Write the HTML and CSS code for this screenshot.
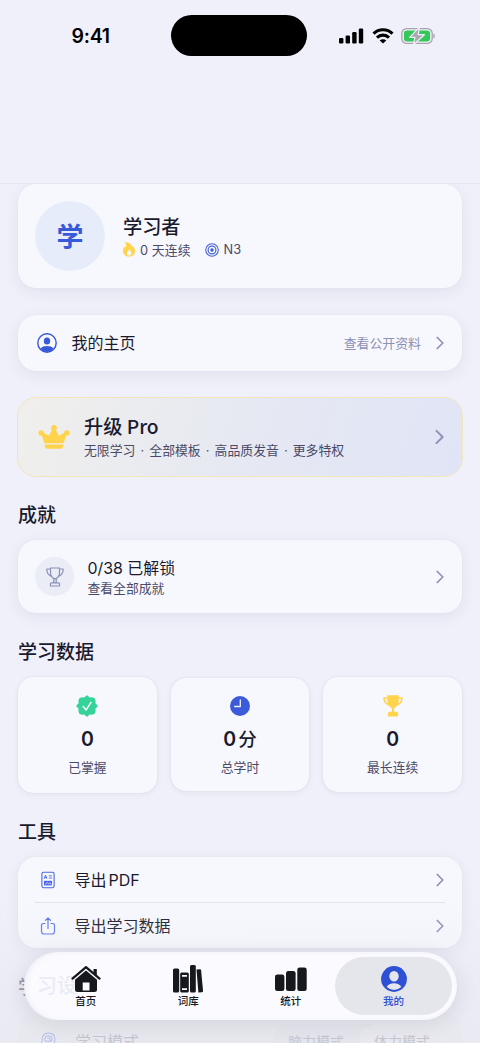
FILE: index.html
```html
<!DOCTYPE html>
<html lang="zh-CN">
<head>
<meta charset="utf-8">
<meta name="viewport" content="width=device-width, initial-scale=1">
<title>我的</title>
<link rel="stylesheet" href="styles.css">
</head>
<body>
<svg class="defs" width="0" height="0">
  <symbol id="chev" viewBox="0 0 8 14"><path d="M1.3 1.5 6.8 7l-5.5 5.5" fill="none" stroke="currentColor" stroke-width="1.7" stroke-linecap="round" stroke-linejoin="round"/></symbol>
</svg>
<div class="phone">
  <header class="top">
    <div class="time">9:41</div>
    <div class="island"></div>
    <div class="signals">
      <svg width="25" height="16" viewBox="0 0 25 16"><rect x="0" y="10" width="4.4" height="5.5" rx="1.2"/><rect x="6.6" y="7.5" width="4.4" height="8" rx="1.2"/><rect x="13.2" y="4" width="4.4" height="11.5" rx="1.2"/><rect x="19.8" y="0.5" width="4.4" height="15" rx="1.2"/></svg>
      <svg class="wifi" width="22" height="16" viewBox="0 0 22 16"><g fill="none" stroke="#000" stroke-width="3.1"><path d="M1.500 5.600a13.500 13.500 0 0 1 19 0"/><path d="M5 9.600a8.500 8.500 0 0 1 12 0"/></g><path d="M11 15.500 7.700 12.500a4.700 4.700 0 0 1 6.600 0z"/></svg>
      <svg class="battery" width="35" height="18" viewBox="0 0 35 18"><rect x=".8" y="1.6" width="30.4" height="14.8" rx="5" fill="none" stroke="#a5a5aa" stroke-width="1.3"/><rect x="2.9" y="3.5" width="26.2" height="11" rx="3.2" fill="#34c759"/><path d="M32.3 6.400c2 .6 2 4.600 0 5.200z" fill="#a5a5aa"/><path d="M18.400.2 8.600 10.300h5.300L12.400 17.800 23.400 7.700h-6.200z" fill="#a9a9ae" stroke="#f0f0fa" stroke-width="1.200" stroke-linejoin="round"/></svg>
    </div>
  </header>
  <main class="content">
    <section class="card profile">
      <div class="avatar">学</div>
      <div class="who">
        <h1>学习者</h1>
        <div class="meta">
          <svg width="12" height="15" viewBox="0 0 12 15"><path fill="#ffd34b" fill-rule="evenodd" d="M1.500.2C6.500.2 9 2.500 9.200 5c.4-.2.7-.6.8-1C11.300 5.500 12 7.300 12 9c0 3.500-2.500 5.600-6 5.600S0 12.500 0 9.100C0 7.300.5 5.800 1.700 4.500c.2.700.5 1 1 1C3.600 3.800 3.100 1.600 1.500.2zM6.600 6.500c.1 1.900-2.700 2.600-2.700 4.800 0 1.400 1 2.200 2.200 2.200 1.400 0 2.400-.9 2.400-2.400 0-.7-.2-1.400-.7-1.900-.1.400-.3.600-.6.700.2-1.400-.1-2.600-.6-3.400z"/></svg>
          <span>0 天连续</span>
          <svg class="target" width="14" height="14" viewBox="0 0 14 14" fill="none" stroke="#4662dc"><circle cx="7" cy="7" r="6.300" stroke-width="1.100"/><circle cx="7" cy="7" r="3.900" stroke-width="1.200"/><circle cx="7" cy="7" r="1.700" fill="#3758d8" stroke="none"/></svg>
          <span>N3</span>
        </div>
      </div>
    </section>

    <section class="card home">
      <svg width="20" height="20" viewBox="0 0 20 20"><circle cx="10" cy="10" r="9.200" fill="none" stroke="#3758d8" stroke-width="1.400"/><ellipse cx="10" cy="8" rx="3.200" ry="3.600" fill="#3758d8"/><path d="M3.500 15.600c1.200-1.700 3.700-2.500 6.500-2.500s5.300.8 6.500 2.500C15 17.600 12.700 18.900 10 18.900s-5-1.300-6.500-3.300z" fill="#3758d8"/></svg>
      <span class="label">我的主页</span>
      <span class="hint">查看公开资料</span>
      <svg class="chev"><use href="#chev"/></svg>
    </section>

    <section class="pro">
      <svg width="32" height="24" viewBox="0 0 32 24" fill="#ffd34b"><path d="M3 8.500 5.500 7.500 10.200 10.500q.7.300 1-.3L14.600 4h2.800l3.400 6.200q.3.600 1 .3l4.700-3L29 8.500 25.900 17.300q-.2.900-1.100.9H7.200q-.9 0-1.100-.9z"/><circle cx="3.200" cy="8" r="2.700"/><circle cx="28.800" cy="8" r="2.700"/><circle cx="16" cy="3" r="2.900"/><path d="M6.400 19.400h19.200l-.5 2.200q-.4 2.200-2.500 2.200H9.400q-2.100 0-2.500-2.200z"/></svg>
      <div class="protext"><h2>升级 Pro</h2><p>无限学习 · 全部模板 · 高品质发音 · 更多特权</p></div>
      <svg class="chev large"><use href="#chev"/></svg>
    </section>

    <h3 class="t-ach">成就</h3>
    <section class="card ach">
      <div class="cup"><svg width="18" height="20" viewBox="0 0 18 20" fill="none" stroke="#8b8fb5" stroke-width="1.200" stroke-linejoin="round"><path d="M4.500 1h9v4.800c0 3-1.700 5.200-4.500 6-2.800-.8-4.500-3-4.500-6z"/><path d="M4.500 2H.8c0 4 1.700 6.500 5.200 7.500M13.500 2h3.700c0 4-1.700 6.500-5.200 7.500M7.800 11.500v4.200M10.200 11.500v4.200M4.500 19v-2.200q0-1 1-1h7q1 0 1 1V19z"/></svg></div>
      <div class="achtext"><b>0/38 已解锁</b><span>查看全部成就</span></div>
      <svg class="chev"><use href="#chev"/></svg>
    </section>

    <h3 class="t-data">学习数据</h3>
    <section class="stats">
      <div class="stat a">
        <svg width="22" height="22" viewBox="0 0 22 22"><path d="M11 1 13.600 3.300Q16 2.500 18.200 3.800 19.500 6 18.700 8.400L21 11 18.700 13.600Q19.500 16 18.200 18.200 16 19.500 13.600 18.700L11 21 8.400 18.700Q6 19.500 3.800 18.200 2.500 16 3.300 13.600L1 11 3.300 8.400Q2.500 6 3.800 3.800 6 2.500 8.400 3.300z" fill="#35d399" stroke="#35d399" stroke-width="1.400" stroke-linejoin="round"/><path d="m7.200 11.600 2.900 3.300 4.900-7.500" fill="none" stroke="#fff" stroke-width="1.500" stroke-linecap="round" stroke-linejoin="round"/></svg>
        <strong>0</strong><span>已掌握</span>
      </div>
      <div class="stat b">
        <svg width="22" height="22" viewBox="0 0 22 22"><circle cx="11" cy="11" r="10" fill="#3b5bdb"/><path d="M11.300 5v6.500H5.600" fill="none" stroke="#eef1ff" stroke-width="1.300" stroke-linecap="round" stroke-linejoin="round"/></svg>
        <strong>0<i>分</i></strong><span>总学时</span>
      </div>
      <div class="stat c">
        <svg width="22" height="22" viewBox="0 0 22 22" fill="#ffd34b"><path d="M5.200.6q0-.4.500-.4h10.600q.5 0 .5.400l-.2 6.400c-.1 2.600-1.600 4.500-4 5.700-.4.300-.5.700-.5 1.300v2.800h2.200q1.800 0 1.800 1.800v2.300q0 .5-.5.500H6.400q-.5 0-.5-.5v-2.300q0-1.800 1.800-1.800h2.200V14c0-.6-.1-1-.5-1.300C7 11.500 5.500 9.600 5.400 7z"/><path d="M6 3H2q0 5.800 6 7.200M16 3h4q0 5.800-6 7.200" fill="none" stroke="#ffd34b" stroke-width="1.500"/></svg>
        <strong>0</strong><span>最长连续</span>
      </div>
    </section>

    <h3 class="t-tools">工具</h3>
    <section class="card tools">
      <div class="row">
        <svg width="16" height="18" viewBox="0 0 16 18"><rect x="1.900" y="1.300" width="12.200" height="15.400" rx="1.600" fill="none" stroke="#4a67df" stroke-width="1.100"/><path d="m4 7.800 1.500-3.700L7 7.800M4.500 6.600h2M8.800 4.800H12M8.800 7H12" fill="none" stroke="#4a67df" stroke-width=".9"/><path d="M4 9.800h8v4.600H4z" fill="#4a67df"/><path d="m5 13.500 2.200-2 1.300 1.300 1.500-1 1.200 1.700" fill="none" stroke="#fff" stroke-width=".7"/></svg>
        <span>导出<span class="pdf">PDF</span></span>
        <svg class="chev"><use href="#chev"/></svg>
      </div>
      <div class="row second">
        <svg width="16" height="20" viewBox="0 0 16 20" fill="none" stroke="#5b75e2" stroke-width="1.200" stroke-linecap="round" stroke-linejoin="round"><path d="M5 7.500H3.500Q1.500 7.500 1.500 9.500v6q0 2.500 2.500 2.500h8q2.500 0 2.500-2.500v-6q0-2-2-2H11M8 12.500V2M5.400 4.400 8 1.800l2.600 2.600"/></svg>
        <span>导出学习数据</span>
        <svg class="chev"><use href="#chev"/></svg>
      </div>
    </section>

    <h3 class="t-settings">学习设置</h3>
    <section class="card settings">
      <svg width="16" height="18" viewBox="0 0 16 18" fill="none" stroke="#93a3eb" stroke-width="1.100"><path d="M3.500 17v-3L1 12l1.200-3C1.700 4 4 1 8.500 1 13 1 15 4 15 7.500c0 3-1.500 4-2 6V17"/><path d="M5 6q1-3 4-2 4 0 3 4-2 2-4 1-4 1-3-3zM7 6h3v2"/></svg>
      <span>学习模式</span>
      <div class="segment"><span>脑力模式</span><span class="on">体力模式</span></div>
    </section>
  </main>

  <div class="fade"></div>
  <nav class="tabs">
    <span class="ghost">习设</span>
    <a class="tab">
      <svg width="30" height="28" viewBox="0 0 30 28" fill="#16181e"><path d="M1.500 13.600 15 2.100 28.500 13.600" fill="none" stroke="#16181e" stroke-width="2.300" stroke-linecap="round" stroke-linejoin="round"/><path d="M22.500 4h3.300v6.500l-3.300-2.800z"/><path fill-rule="evenodd" d="M15 5.400 26 14.700V24.500q0 2.500-2.500 2.500h-17Q4 27 4 24.500V14.700zM11.700 17.500v8h6.800v-8z"/></svg>
      <span>首页</span>
    </a>
    <a class="tab">
      <svg width="30" height="28" viewBox="0 0 30 28" fill="#16181e"><rect x="0" y="3.500" width="6.200" height="24" rx="1.500"/><path fill-rule="evenodd" d="M8.700 7.500h5.600q1.500 0 1.500 1.500v17q0 1.500-1.500 1.500H8.700q-1.500 0-1.500-1.500V9q0-1.500 1.500-1.500zM9 10v1.800h5V10zM9 23.300v1.800h5v-1.800z"/><rect x="17" y="0" width="5.800" height="27.500" rx="1.500"/><path d="M23.500 4.500 27 4.200q1 0 1.100 1L30 25.500q.1 1.500-1.200 1.700l-3.400.3z"/></svg>
      <span>词库</span>
    </a>
    <a class="tab">
      <svg width="32" height="28" viewBox="0 0 32 28" fill="#16181e"><rect x="0" y="9.500" width="9.400" height="16.500" rx="2.300"/><rect x="11" y="6" width="9.600" height="20" rx="2.300"/><rect x="22.300" y="2.500" width="9.400" height="23.500" rx="2.300"/></svg>
      <span>统计</span>
    </a>
    <a class="tab active">
      <svg width="28" height="28" viewBox="0 0 28 28"><circle cx="14" cy="14" r="12.900" fill="#2e50d5"/><ellipse cx="14" cy="11.200" rx="4.700" ry="5.200" fill="#e5e6ec"/><path d="M6.700 22.100q1.800-3.900 7.300-3.900t7.300 3.900Q18.300 24.900 14 24.900t-7.300-2.800z" fill="#e5e6ec"/></svg>
      <span>我的</span>
    </a>
  </nav>
</div>
</body>
</html>
```

FILE: styles.css
```css
* { box-sizing: border-box; }
body {
  margin: 0;
  font-family: Inter, "Noto Sans CJK SC", sans-serif;
  color: #1a1a2e;
  background: #f0f0fa;
}
h1, h2, h3, p { margin: 0; font-weight: 500; }
svg { display: block; flex: none; }
.defs { position: absolute; }
.phone { position: relative; height: 1043px; overflow: hidden; background: #f0f0fa; }

.top {
  display: flex;
  height: 184px;
  padding: 15px 44px 0 51px;
  border-bottom: 1px solid #e7e7ee;
}
.time { width: 80px; height: 42px; text-align: center; font: 600 19.5px/42px Inter, sans-serif; color: #000; letter-spacing: -.2px; }
.island { width: 137px; height: 41px; margin-left: 41px; border-radius: 21px; background: #000; }
.signals { display: flex; align-items: center; height: 41px; margin-left: 32px; }
.wifi { margin-left: 7.500px; }
.battery { margin-left: 7.500px; }

.content { padding: 0 18px; }
.card {
  display: flex;
  align-items: center;
  border-radius: 18px;
  background: #f7f8fd;
  box-shadow: 0 4px 16px rgba(40, 40, 80, .07), 0 0 1px rgba(40, 40, 80, .1);
}
.chev { width: 8px; height: 14px; margin-left: auto; color: #8e90b4; }
.chev.large { width: 9px; height: 16px; }

.profile { height: 104px; padding-left: 17px; clip-path: inset(0 -18px -30px -18px); }
.avatar { width: 70px; height: 70px; border-radius: 50%; background: #e7ecfb; color: #3758d8; font-size: 27px; font-weight: 700; line-height: 73px; text-align: center; }
.who { margin-left: 18px; }
h1 { font-size: 19.200px; line-height: 27px; padding-top: 2px; margin-bottom: -2px; }
.meta { display: flex; align-items: center; height: 21px; font-size: 12.800px; letter-spacing: .1px; color: #4a4a68; }
.meta span { margin-left: 5px; }
.meta .target { margin-left: 14px; }

.home { height: 56px; margin-top: 27px; padding: 0 18px 0 19px; }
.home .label { margin-left: 14.500px; font-size: 16px; line-height: 22px; }
.hint { margin-left: auto; margin-top: -1px; font-size: 12.900px; color: #8e90b4; }
.home .chev { margin-left: 15px; }

.pro {
  display: flex;
  align-items: center;
  height: 80px;
  margin: 26px -1px 0;
  padding: 0 18px 0 20px;
  border: 1px solid #f2e5bd;
  border-radius: 19px;
  background: linear-gradient(110deg, #f0efec, #e6e9f2 50%, #e0e4f6);
}
.protext { margin-left: 14px; padding-top: 2px; }
h2 { font-size: 19.200px; line-height: 25px; }
h2, h3 { font-family: "Noto Sans CJK SC", sans-serif; }
.pro p { font-size: 12.850px; line-height: 23px; font-weight: 400; word-spacing: 1.500px; color: #4a4a68; white-space: nowrap; }

h3 { font-size: 19px; line-height: 28px; }
.t-ach { margin-top: 23px; }
.ach { height: 73px; margin-top: 12px; padding: 0 18px 0 17px; }
.cup { display: flex; align-items: center; justify-content: center; width: 39px; height: 39px; border-radius: 50%; background: #eaedf6; }
.achtext { display: flex; flex-direction: column; margin-left: 13.500px; padding-top: 2px; }
.achtext b { font-size: 15.900px; line-height: 21px; font-weight: 400; }
.achtext span { font-size: 12.800px; line-height: 19px; color: #4a4a68; }

.t-data { margin-top: 24px; }
.stats { display: grid; grid-template-columns: repeat(3, 1fr); gap: 14px; align-items: start; height: 116px; margin-top: 12px; }
.stat {
  display: flex;
  flex-direction: column;
  align-items: center;
  justify-content: center;
  height: 116px;
  padding-top: 2px;
  border-radius: 15px;
  background: #f7f8fd;
  box-shadow: 0 2px 7px rgba(40, 40, 80, .05), 0 0 2px rgba(40, 40, 80, .1);
}
.stat.b { height: 113px; margin-top: 1px; padding-top: 3px; }
.stat.c { height: 115px; padding-top: 3px; }
.stat strong { margin-top: 9px; font-size: 19.500px; line-height: 27px; font-weight: 600; }
.stat i { margin-left: 2px; font-style: normal; font-size: 18.500px; font-weight: 500; }
.stat span { margin-top: 5px; font-size: 12.800px; line-height: 20px; color: #4a4a68; }

.t-tools { margin-top: 24px; }
.tools { display: block; height: 91px; margin-top: 12px; padding: 0 17px; }
.row { display: flex; align-items: center; height: 46px; padding: 0 1px 0 5px; font-size: 16px; border-bottom: 1px solid #e2e3eb; }
.row > span { margin-left: 18.500px; margin-top: -2px; }
.row .pdf { margin-left: 2px; }
.row.second { border-bottom: 0; }
.t-settings { margin-top: 24px; color: #777889; }
.settings { height: 60px; margin-top: 12px; padding: 0 17px 2px 22px; color: #aaabb7; background: #edeef5; box-shadow: none; }
.settings > span { margin-left: 19px; }
.segment { display: flex; height: 35px; margin-left: auto; border-radius: 18px; background: #e8e9f0; font-size: 14px; line-height: 35px; }
.segment span { width: 86px; text-align: center; }
.segment .on { border-radius: 18px; background: #eff0f5; }

.fade { position: absolute; inset: 900px 0 0; background: linear-gradient(rgba(226, 226, 234, 0), rgba(226, 226, 234, .35) 65%, rgba(228, 228, 235, .5)); }
.tabs {
  position: absolute;
  left: 24px;
  top: 952px;
  display: grid;
  grid-template-columns: 102.500px 102.500px 102.500px 117px;
  width: 433px;
  height: 68px;
  padding: 5px 0 5px 10.500px;
  border-radius: 34px;
  background: #fafaff;
  box-shadow: 0 5px 22px rgba(40, 40, 60, .11), inset 2px 0 5px rgba(210, 212, 228, .25);
}
.tab { position: relative; display: flex; flex-direction: column; align-items: center; padding-top: 8px; font-size: 10.500px; font-weight: 500; line-height: 15px; color: #16181e; }
.tab span { margin-top: 1px; }
.tab.active { margin: 0 7px 0 -7px; border-radius: 29px; background: #e5e6ec; color: #2e50d5; }
.ghost { position: absolute; left: 13px; top: 20px; color: #ebebf6; font-size: 20px; line-height: 28px; font-weight: 500; }
```
